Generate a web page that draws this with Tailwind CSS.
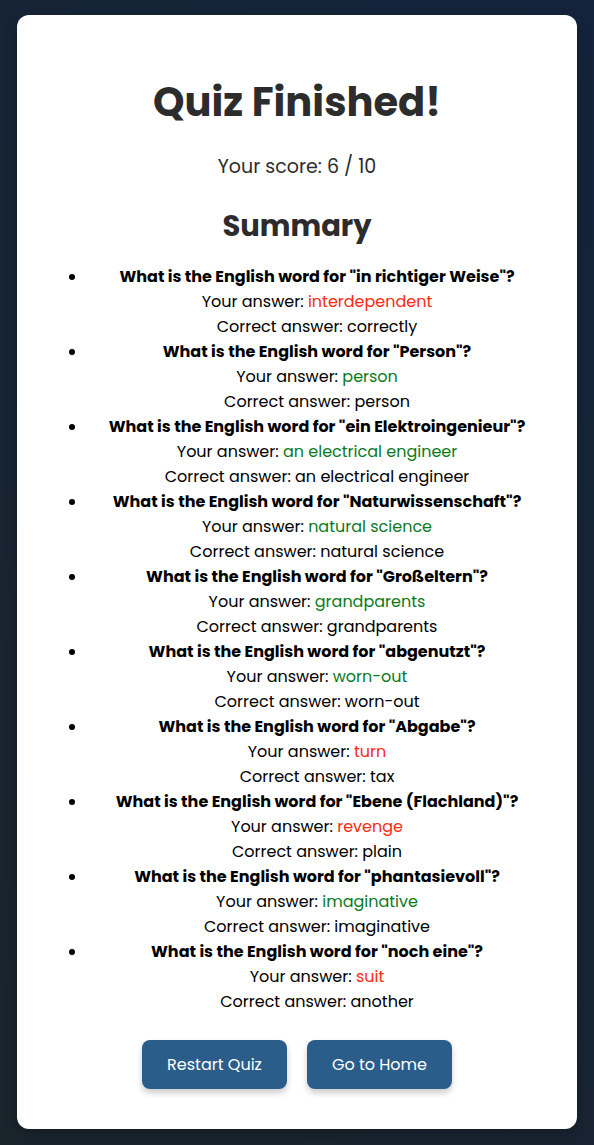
<!DOCTYPE html>
<html lang="en">
<head>
<meta charset="utf-8">
<meta name="viewport" content="width=device-width, initial-scale=1">
<title>Quiz Finished</title>
<script src="https://cdn.jsdelivr.net/npm/@tailwindcss/browser@4"></script>
</head>
<body class="flex min-h-screen items-start justify-center bg-linear-45 from-[#19242b] to-[#14233b] px-[17px] pt-[15px] pb-4 font-['Poppins','Inter',sans-serif] text-base leading-[25px] text-black">
<main class="w-full max-w-[800px] rounded-xl bg-white px-10 pt-[57px] pb-10 text-center shadow-[0_4px_12px_rgba(0,0,0,0.2)]">
  <h1 class="text-[40px] leading-[60px] font-bold text-[#2c2c2c]">Quiz Finished!</h1>
  <p class="mt-5 text-[19px] leading-[30px] text-[#2c2c2c]">Your score: 6 / 10</p>
  <h2 class="mt-[22px] text-[29px] leading-[44px] font-bold text-[#2c2c2c]">Summary</h2>
  <ul class="mt-4 list-disc pl-[30px] [&>li]:pl-[10px]">
    <li><strong class="font-bold">What is the English word for "in richtiger Weise"?</strong><br>Your answer: <span class="text-[#fb2b11]">interdependent</span><br>Correct answer: correctly</li>
    <li><strong class="font-bold">What is the English word for "Person"?</strong><br>Your answer: <span class="text-[#0b7a1e]">person</span><br>Correct answer: person</li>
    <li><strong class="font-bold">What is the English word for "ein Elektroingenieur"?</strong><br>Your answer: <span class="text-[#0b7a1e]">an electrical engineer</span><br>Correct answer: an electrical engineer</li>
    <li><strong class="font-bold">What is the English word for "Naturwissenschaft"?</strong><br>Your answer: <span class="text-[#0b7a1e]">natural science</span><br>Correct answer: natural science</li>
    <li><strong class="font-bold">What is the English word for "Großeltern"?</strong><br>Your answer: <span class="text-[#0b7a1e]">grandparents</span><br>Correct answer: grandparents</li>
    <li><strong class="font-bold">What is the English word for "abgenutzt"?</strong><br>Your answer: <span class="text-[#0b7a1e]">worn-out</span><br>Correct answer: worn-out</li>
    <li><strong class="font-bold">What is the English word for "Abgabe"?</strong><br>Your answer: <span class="text-[#fb2b11]">turn</span><br>Correct answer: tax</li>
    <li><strong class="font-bold">What is the English word for "Ebene (Flachland)"?</strong><br>Your answer: <span class="text-[#fb2b11]">revenge</span><br>Correct answer: plain</li>
    <li><strong class="font-bold">What is the English word for "phantasievoll"?</strong><br>Your answer: <span class="text-[#0b7a1e]">imaginative</span><br>Correct answer: imaginative</li>
    <li><strong class="font-bold">What is the English word for "noch eine"?</strong><br>Your answer: <span class="text-[#fb2b11]">suit</span><br>Correct answer: another</li>
  </ul>
  <div class="mt-[26px] flex flex-wrap justify-center gap-5">
    <button type="button" class="min-w-[145px] rounded-lg bg-[#2a5d8a] px-5 py-3 text-white shadow-[0_4px_6px_rgba(0,0,0,0.2)]">Restart Quiz</button>
    <button type="button" class="min-w-[145px] rounded-lg bg-[#2a5d8a] px-5 py-3 text-white shadow-[0_4px_6px_rgba(0,0,0,0.2)]">Go to Home</button>
  </div>
</main>
</body>
</html>
